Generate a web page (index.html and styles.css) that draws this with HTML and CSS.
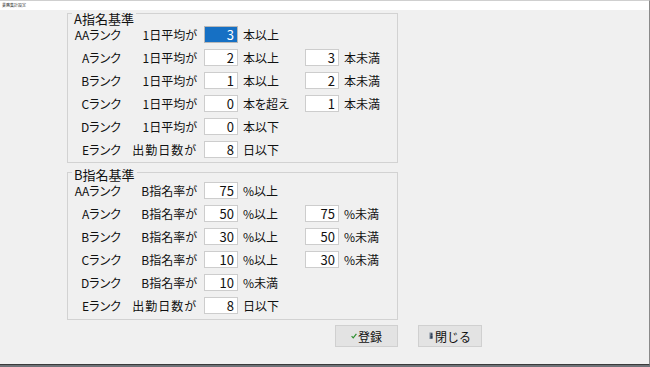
FILE: index.html
```html
<!DOCTYPE html>
<html lang="ja">
<head>
<meta charset="utf-8">
<title>指名基準設定</title>
<link rel="stylesheet" href="styles.css">
</head>
<body>
<div class="window">
  <div class="titlebar"><span class="title">業務集計設定</span></div>
  <div class="content">
    <fieldset class="group group-a">
      <legend class="legend legend-a">A指名基準</legend>
      <div class="rows">
        <div class="row"><span class="rank">AAランク</span><span class="cond">1日平均が</span><input class="num selected" value="3" readonly><span class="unit">本以上</span></div>
        <div class="row"><span class="rank">Aランク</span><span class="cond">1日平均が</span><input class="num" value="2" readonly><span class="unit">本以上</span><input class="num" value="3" readonly><span class="unit">本未満</span></div>
        <div class="row"><span class="rank">Bランク</span><span class="cond">1日平均が</span><input class="num" value="1" readonly><span class="unit">本以上</span><input class="num" value="2" readonly><span class="unit">本未満</span></div>
        <div class="row"><span class="rank">Cランク</span><span class="cond">1日平均が</span><input class="num" value="0" readonly><span class="unit">本を超え</span><input class="num" value="1" readonly><span class="unit">本未満</span></div>
        <div class="row"><span class="rank">Dランク</span><span class="cond">1日平均が</span><input class="num" value="0" readonly><span class="unit">本以下</span></div>
        <div class="row"><span class="rank">Eランク</span><span class="cond wide">出勤日数が</span><input class="num" value="8" readonly><span class="unit">日以下</span></div>
      </div>
    </fieldset>
    <fieldset class="group group-b">
      <legend class="legend legend-b">B指名基準</legend>
      <div class="rows">
        <div class="row"><span class="rank">AAランク</span><span class="cond">B指名率が</span><input class="num" value="75" readonly><span class="unit">%以上</span></div>
        <div class="row"><span class="rank">Aランク</span><span class="cond">B指名率が</span><input class="num" value="50" readonly><span class="unit">%以上</span><input class="num" value="75" readonly><span class="unit">%未満</span></div>
        <div class="row"><span class="rank">Bランク</span><span class="cond">B指名率が</span><input class="num" value="30" readonly><span class="unit">%以上</span><input class="num" value="50" readonly><span class="unit">%未満</span></div>
        <div class="row"><span class="rank">Cランク</span><span class="cond">B指名率が</span><input class="num" value="10" readonly><span class="unit">%以上</span><input class="num" value="30" readonly><span class="unit">%未満</span></div>
        <div class="row"><span class="rank">Dランク</span><span class="cond">B指名率が</span><input class="num" value="10" readonly><span class="unit">%未満</span></div>
        <div class="row"><span class="rank">Eランク</span><span class="cond wide">出勤日数が</span><input class="num" value="8" readonly><span class="unit">日以下</span></div>
      </div>
    </fieldset>
    <div class="actions">
      <button class="btn btn-save" type="button"><svg class="ico" width="6" height="6" viewBox="0 0 6 6"><path d="M0.6 3.2 L2.2 4.8 L5.4 0.9" fill="none" stroke="#2f8f2f" stroke-width="1.2"/></svg>登録</button>
      <button class="btn btn-close" type="button"><svg class="ico" width="5" height="8" viewBox="0 0 5 8"><rect x="0.5" y="0.5" width="3" height="6.5" fill="#7a8696"/><circle cx="2.6" cy="2.2" r="0.9" fill="#2c3e57"/><rect x="1.5" y="3.4" width="2" height="3" fill="#2c3e57"/></svg>閉じる</button>
    </div>
  </div>
</div>
</body>
</html>
```
FILE: styles.css
```css
* { box-sizing: border-box; }
html, body { margin: 0; padding: 0; }
body {
  background: #6f7378;
  font-family: "Noto Sans CJK JP", "Noto Sans", sans-serif;
  color: #111;
}
.window {
  width: 650px;
  height: 365px;
  background: #f0f0f0;
  border-top: 1px solid #cfcfcf;
  border-right: 1px solid #8a8a8a;
  border-bottom: 1px solid #3a3a3a;
  display: flex;
  flex-direction: column;
}
.titlebar {
  height: 9px;
  background: #fff;
  padding-left: 2px;
  display: flex;
  align-items: center;
}
.title {
  font-size: 4px;
  line-height: 5px;
  color: #333;
}
.content {
  flex: 1;
  padding-left: 67px;
}
.group {
  width: 331px;
  margin: 0;
  padding: 0 0 4px 6px;
  border: 1px solid #d2d2d2;
  min-inline-size: 0;
}
.group-a { margin-top: -9px; }
.group-b { padding-bottom: 5px; }
.legend {
  font-size: 13px;
  line-height: 14px;
  padding: 0 2px;
  margin-left: -2px;
  font-feature-settings: "palt";
  color: #111;
}
.legend-a { padding-top: 11px; }
.legend-b { padding-top: 5px; }
.rows {
  display: flex;
  flex-direction: column;
  gap: 6px;
}
.row {
  display: grid;
  grid-template-columns: 47px 76px 41px 62px 39px auto;
  height: 17px;
  align-items: center;
  font-size: 12px;
  line-height: 17px;
  font-feature-settings: "palt";
}
.rank, .cond { text-align: right; white-space: nowrap; }
.cond.wide { letter-spacing: 1px; }
.unit { padding-left: 5px; white-space: nowrap; }
.num {
  justify-self: end;
  width: 34px;
  height: 17px;
  margin: 0;
  padding: 0 3px 0 0;
  border: 1px solid #cdcdcd;
  background: #fff;
  font-family: "Noto Sans CJK JP", "Noto Sans", sans-serif;
  font-size: 13px;
  line-height: 15px;
  color: #111;
  text-align: right;
  outline: none;
}
.num.selected {
  background: #1670c4;
  border-color: #b8b8b8;
  color: #fff;
}
.actions {
  display: flex;
  gap: 20px;
  margin-top: 5px;
  padding-left: 268px;
}
.btn {
  height: 22px;
  padding: 0;
  border: 1px solid #d0d0d0;
  background: #e3e3e3;
  font-family: "Noto Sans CJK JP", "Noto Sans", sans-serif;
  font-size: 12px;
  color: #111;
  display: flex;
  align-items: center;
  justify-content: center;
  gap: 1px;
}
.btn-save { width: 63px; }
.btn-close { width: 64px; }
.ico { display: block; }
```
